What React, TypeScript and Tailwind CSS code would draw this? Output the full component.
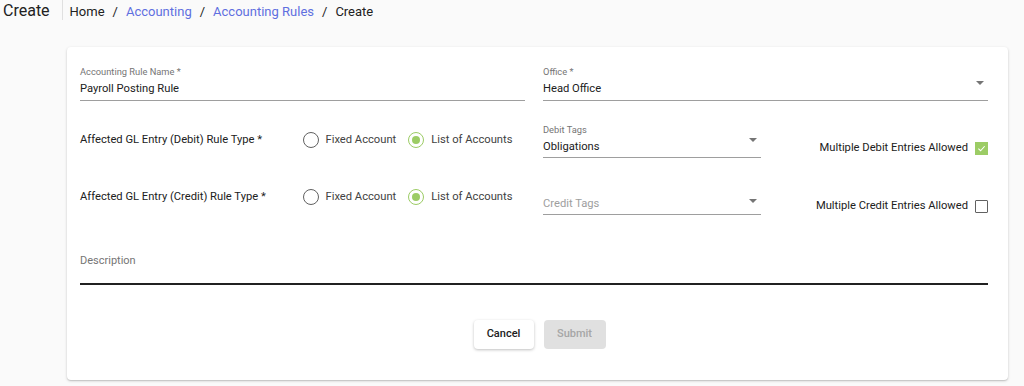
const Radio = ({ checked, label }: { checked: boolean; label: string }) => (
  <label className="flex items-center gap-[7px] whitespace-nowrap">
    {checked ? (
      <span className="w-[16px] h-[16px] rounded-full border-[1.5px] border-[#9ccc65] flex items-center justify-center">
        <span className="w-[8px] h-[8px] rounded-full bg-[#9ccc65]" />
      </span>
    ) : (
      <span className="w-[16px] h-[16px] rounded-full border-[1.5px] border-[#616161]" />
    )}
    <span className="text-[11.2px] leading-[18px] text-[#424242]">{label}</span>
  </label>
);

const Arrow = () => (
  <span className="block w-0 h-0 border-l-[4px] border-r-[4px] border-t-[4px] border-l-transparent border-r-transparent border-t-[#757575]" />
);

const Check = ({ checked, label }: { checked: boolean; label: string }) => (
  <div className="flex items-center justify-end gap-[7px]">
    <span className="text-[11.2px] leading-[18px] text-[#212121] whitespace-nowrap">{label}</span>
    {checked ? (
      <span className="w-[13px] h-[13px] bg-[#9ccc65] flex items-center justify-center">
        <svg width="9" height="9" viewBox="0 0 10 10">
          <path d="M1.5 5.2 L4 7.5 L8.5 2.5" stroke="#fff" strokeWidth="1.2" fill="none" />
        </svg>
      </span>
    ) : (
      <span className="w-[13px] h-[13px] border-[1.5px] border-[#616161] rounded-[1px]" />
    )}
  </div>
);

const App = () => {
  return (
    <div className="min-h-[386px] bg-[#fafafa] font-['Roboto',sans-serif] pb-[5px]">
      {/* Header */}
      <div className="flex items-start h-[22px]">
        <h1 className="pl-[3px] pr-[12px] h-[20px] text-[16px] leading-[21px] text-[#212121] border-r border-[#e0e0e0]">
          Create
        </h1>
        <nav className="pl-[7px] pt-[1px] flex items-center gap-[8px] text-[13px] leading-[22px] text-[#212121]">
          <span>Home</span>
          <span>/</span>
          <span className="text-[#5f6fe0]">Accounting</span>
          <span>/</span>
          <span className="text-[#5f6fe0]">Accounting Rules</span>
          <span>/</span>
          <span>Create</span>
        </nav>
      </div>

      {/* Card */}
      <div className="ml-[67px] mr-[16px] mt-[25px] bg-white rounded-[4px] shadow-[0_1px_3px_rgba(0,0,0,0.18),0_1px_1px_rgba(0,0,0,0.1)] pl-[13px] pr-[20px] pt-[19px] pb-[31px]">
        {/* Row 1 */}
        <div className="grid grid-cols-2 gap-[18px]">
          <div className="border-b border-[#9e9e9e] pb-[2px]">
            <div className="text-[9.3px] leading-[12px] text-[#757575]">Accounting Rule Name *</div>
            <div className="mt-[2px] text-[11.2px] leading-[18px] text-[#212121]">Payroll Posting Rule</div>
          </div>
          <div className="border-b border-[#9e9e9e] pb-[2px] flex items-start justify-between">
            <div>
              <div className="text-[9.3px] leading-[12px] text-[#757575]">Office *</div>
              <div className="mt-[2px] text-[11.2px] leading-[18px] text-[#212121]">Head Office</div>
            </div>
            <div className="mt-[15px] mr-[4px]">
              <Arrow />
            </div>
          </div>
        </div>

        {/* Row 2 */}
        <div className="grid grid-cols-2 gap-[18px] mt-[22px]">
          <div className="grid grid-cols-2 items-start pt-[8px]">
            <span className="text-[11.2px] leading-[18px] text-[#212121]">Affected GL Entry (Debit) Rule Type *</span>
            <div className="flex items-center gap-[12px]">
              <Radio checked={false} label="Fixed Account" />
              <Radio checked label="List of Accounts" />
            </div>
          </div>
          <div className="flex items-end justify-between">
            <div className="w-[218px] border-b border-[#9e9e9e] pb-[1px] flex items-start justify-between">
              <div>
                <div className="text-[9.3px] leading-[12px] text-[#757575] mt-[1px]">Debit Tags</div>
                <div className="mt-[2px] text-[11.2px] leading-[18px] text-[#212121]">Obligations</div>
              </div>
              <div className="mt-[15px] mr-[4px]">
                <Arrow />
              </div>
            </div>
            <div className="pb-[1px]">
              <Check checked label="Multiple Debit Entries Allowed" />
            </div>
          </div>
        </div>

        {/* Row 3 */}
        <div className="grid grid-cols-2 gap-[18px] mt-[29px]">
          <div className="grid grid-cols-2 items-start pt-[1px]">
            <span className="text-[11.2px] leading-[18px] text-[#212121]">Affected GL Entry (Credit) Rule Type *</span>
            <div className="flex items-center gap-[12px]">
              <Radio checked={false} label="Fixed Account" />
              <Radio checked label="List of Accounts" />
            </div>
          </div>
          <div className="flex items-end justify-between">
            <div className="w-[218px] mt-[7px] border-b border-[#9e9e9e] pb-[1px] flex items-start justify-between">
              <div className="text-[11.2px] leading-[18px] text-[#9e9e9e] pt-[1px]">Credit Tags</div>
              <div className="mt-[5px] mr-[4px]">
                <Arrow />
              </div>
            </div>
            <div>
              <Check checked={false} label="Multiple Credit Entries Allowed" />
            </div>
          </div>
        </div>

        {/* Description */}
        <div className="mt-[36px] border-b-2 border-[#212121] pb-[13px]">
          <div className="text-[11px] leading-[18px] text-[#757575] pt-[1px]">Description</div>
        </div>

        {/* Actions */}
        <div className="flex justify-center gap-[10px] mt-[35px] ml-[11px]">
          <button className="w-[60px] h-[29px] rounded-[4px] bg-white text-[11px] font-medium text-[#212121] shadow-[0_1px_3px_rgba(0,0,0,0.25)]">
            Cancel
          </button>
          <button className="w-[62px] h-[29px] rounded-[4px] bg-[#e0e0e0] text-[11px] font-medium text-[#a6a6a6]">
            Submit
          </button>
        </div>
      </div>
    </div>
  );
};

export default App;
